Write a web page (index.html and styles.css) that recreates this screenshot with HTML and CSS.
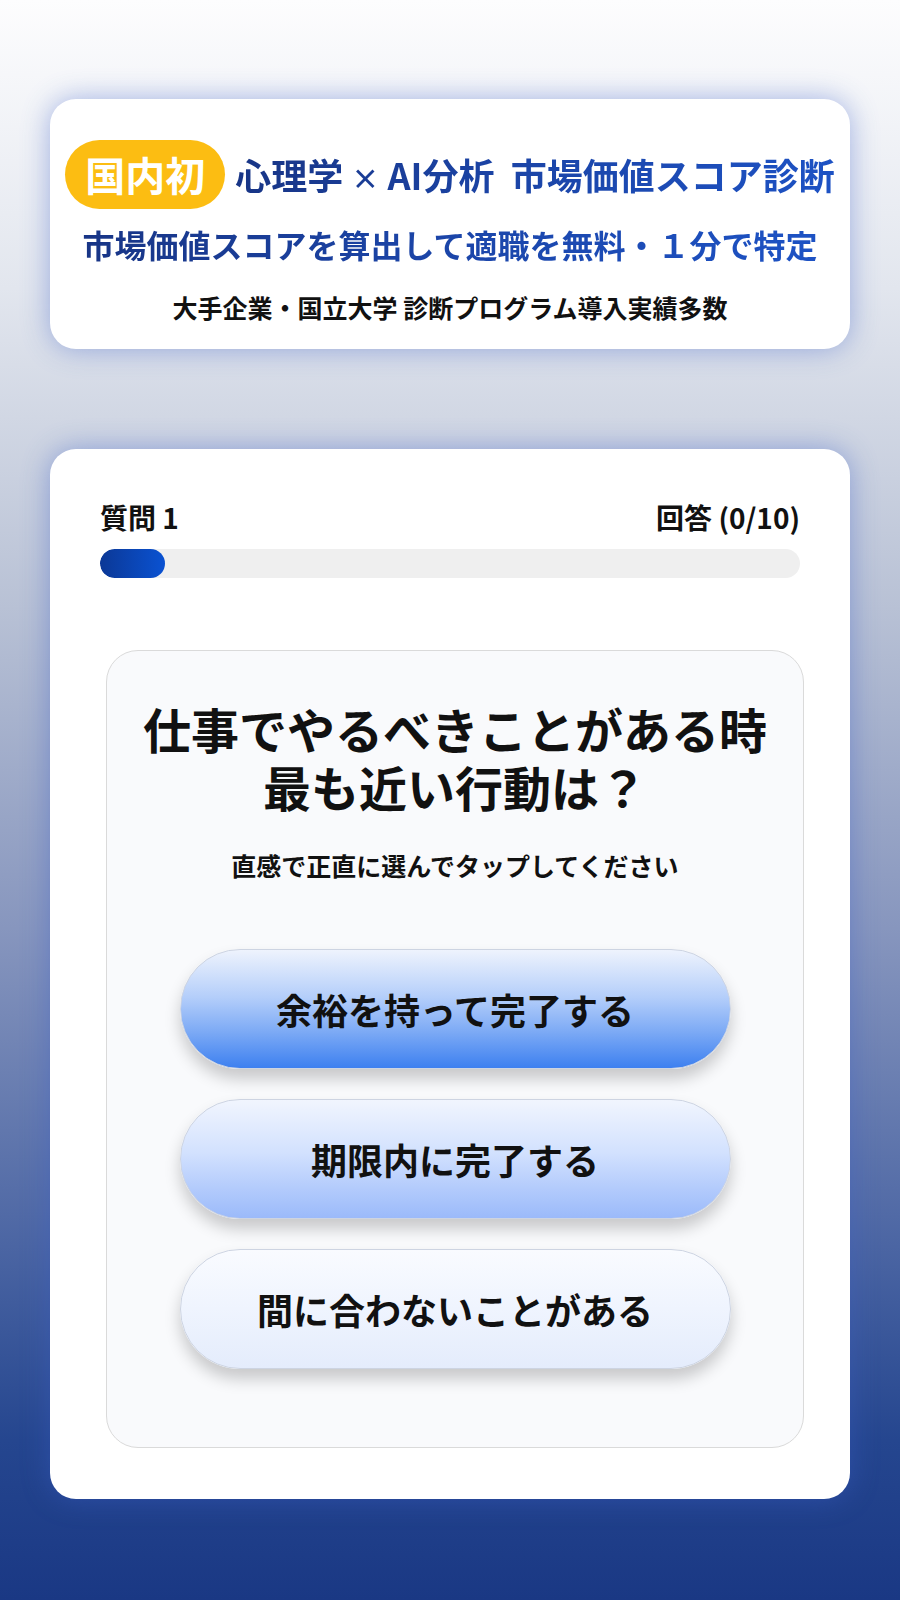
FILE: index.html
```html
<!DOCTYPE html>
<html lang="ja">
<head>
  <meta charset="UTF-8">
  <meta name="viewport" content="width=device-width, initial-scale=1.0">
  <title>市場価値スコア診断</title>
  <link rel="stylesheet" href="styles.css">
</head>
<body>

  <div class="page">
    <div class="intro-card">
      <div class="intro-top">
        <span class="badge">国内初</span>
        <span class="intro-title">心理学 <span class="times">×</span> AI分析&nbsp; 市場価値スコア診断</span>
      </div>
      <div class="intro-lead">市場価値スコアを算出して適職を無料・１分で特定</div>
      <div class="intro-note">大手企業・国立大学 診断プログラム導入実績多数</div>
    </div>

    <div class="quiz-card">
      <div class="quiz-meta">
        <span>質問 1</span>
        <span>回答 (0/10)</span>
      </div>
      <div class="progress">
        <div class="progress-fill" style="width: 9.3%"></div>
      </div>

      <div class="question-box">
        <h1 class="question">
          <span class="question-line">仕事でやるべきことがある時</span>
          <span class="question-line">最も近い行動は？</span>
        </h1>
        <p class="question-hint">直感で正直に選んでタップしてください</p>

        <div class="answers">
          <button class="answer answer-1">余裕を持って完了する</button>
          <button class="answer answer-2">期限内に完了する</button>
          <button class="answer answer-3">間に合わないことがある</button>
        </div>
      </div>
    </div>
  </div>

</body>
</html>
```

FILE: styles.css
```css
body {
  margin: 0;
  padding: 0;
  font-family: "Noto Sans CJK JP", "Noto Sans", sans-serif;
  color: #111;
  background: linear-gradient(180deg, #fdfdfe 0%, #e2e6ee 18%, #b8c1d5 38%, #8796be 58%, #516aa6 76%, #25468f 90%, #1a3884 100%);
  min-height: 1600px;
}

.page {
  padding: 99px 50px 0;
}

/* intro card */

.intro-card {
  background-color: #fff;
  border-radius: 26px;
  padding: 41px 8px 24px;
  box-shadow: 0 0 28px rgba(60, 95, 200, 0.45);
  text-align: center;
}

.intro-top {
  display: flex;
  justify-content: center;
  align-items: center;
  gap: 10px;
  white-space: nowrap;
}

.badge {
  flex-shrink: 0;
  display: inline-block;
  background-color: #fcbd12;
  color: #fff;
  font-size: 40px;
  font-weight: bold;
  line-height: 69px;
  height: 69px;
  padding: 0 20px;
  border-radius: 35px;
}

.intro-title,
.intro-lead {
  font-weight: bold;
  background: linear-gradient(90deg, #183586 0%, #1b44a6 45%, #1d52c4 100%);
  -webkit-background-clip: text;
  background-clip: text;
  color: transparent;
}

.intro-title {
  font-size: 36px;
  line-height: 1.3;
}

.intro-title .times {
  font-size: 28px;
}

.intro-lead {
  display: inline-block;
  margin-top: 13px;
  font-size: 32px;
  line-height: 45px;
  white-space: nowrap;
}

.intro-note {
  margin-top: 23px;
  font-size: 25px;
  font-weight: bold;
  line-height: 35px;
}

/* quiz card */

.quiz-card {
  margin-top: 100px;
  background-color: #fff;
  border-radius: 26px;
  padding: 48px 50px 51px;
  box-shadow: 0 0 28px rgba(60, 95, 200, 0.45);
}

.quiz-meta {
  display: flex;
  justify-content: space-between;
  font-size: 28px;
  font-weight: bold;
  line-height: 40px;
}

.progress {
  margin-top: 12px;
  height: 29px;
  background-color: #efefef;
  border-radius: 15px;
  overflow: hidden;
}

.progress-fill {
  height: 100%;
  border-radius: 15px;
  background: linear-gradient(90deg, #0b3896 0%, #0a52d2 100%);
}

.question-box {
  margin: 72px -4px 0 6px;
  padding: 48px 0 78px;
  background-color: #f9fafc;
  border: 1px solid #dadada;
  border-radius: 32px;
  text-align: center;
}

.question {
  margin: 0;
  font-size: 48px;
  font-weight: bold;
  line-height: 58px;
}

.question-line {
  display: block;
}

.question-hint {
  margin: 33px 0 0;
  font-size: 25px;
  font-weight: bold;
  line-height: 35px;
}

.answers {
  display: flex;
  flex-direction: column;
  align-items: center;
  gap: 30px;
  margin-top: 66px;
}

.answer {
  width: 551px;
  height: 120px;
  border: 1px solid #cdd4e2;
  border-radius: 60px;
  font-family: inherit;
  font-size: 36px;
  font-weight: bold;
  color: #111;
  cursor: pointer;
  box-shadow: 0 10px 16px rgba(0, 0, 0, 0.2);
}

.answer-1 {
  background: linear-gradient(180deg, #eef3fd 0%, #b4cefa 40%, #7ba9f5 70%, #3d80f0 100%);
}

.answer-2 {
  background: linear-gradient(180deg, #f1f5fe 0%, #d2e1fe 45%, #b3cbfc 75%, #9bbafa 100%);
}

.answer-3 {
  background: linear-gradient(180deg, #f9fbff 0%, #eff4fe 50%, #e4ecfc 100%);
}
```
